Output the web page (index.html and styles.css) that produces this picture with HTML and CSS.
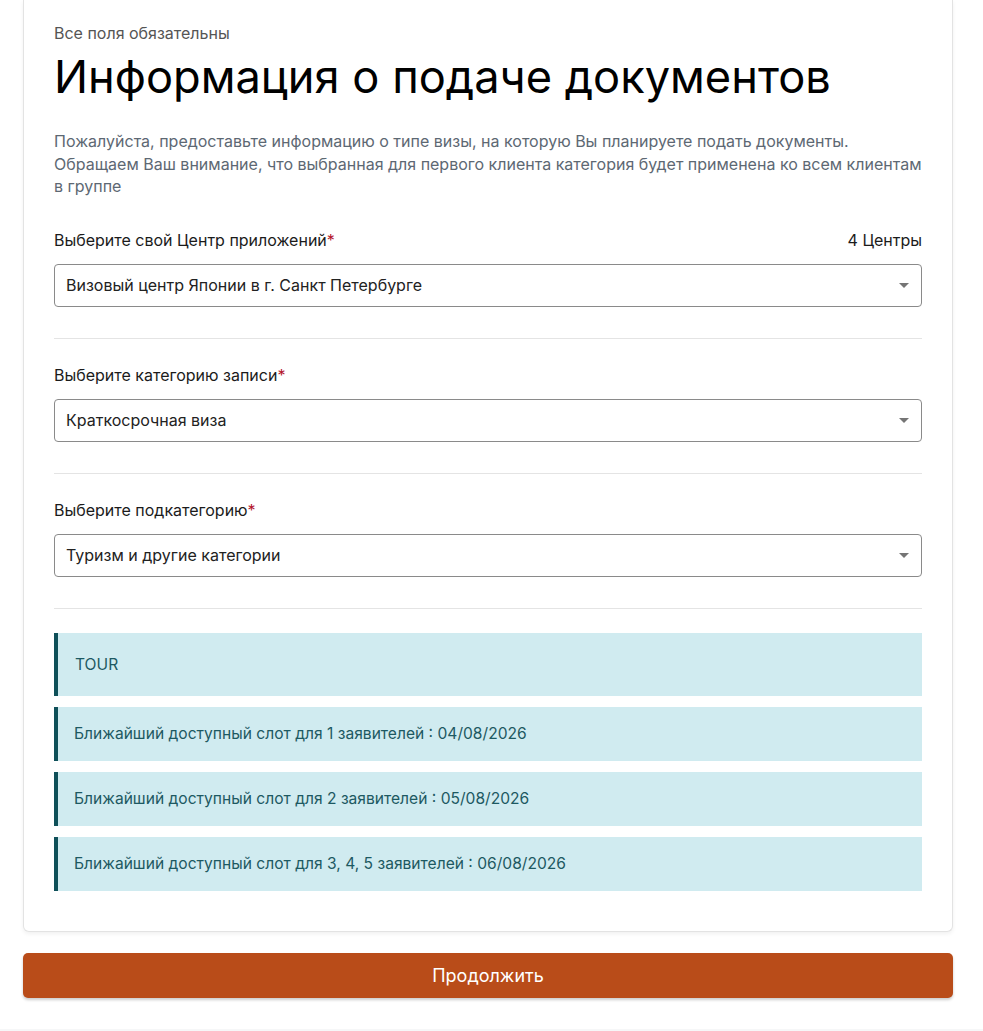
FILE: index.html
```html
<!doctype html>
<html lang="ru">
  <head>
    <meta charset="UTF-8" />
    <meta name="viewport" content="width=device-width, initial-scale=1.0" />
    <title>Информация о подаче документов</title>
    <link rel="stylesheet" href="styles.css">
  </head>
  <body>
    <div class="page">
      <!-- Form card -->
      <div class="form-card">
        <div class="required-note">Все поля обязательны</div>
        <h1 class="form-title">Информация о подаче документов</h1>
        <p class="form-intro">
          Пожалуйста, предоставьте информацию о типе визы, на которую Вы планируете подать документы.
          Обращаем Ваш внимание, что выбранная для первого клиента категория будет применена ко всем клиентам
          в группе
        </p>

        <div class="field-group">
          <div class="field-head">
            <label>Выберите свой Центр приложений<span class="req">*</span></label>
            <span class="field-count">4 Центры</span>
          </div>
          <div class="select-box">
            <span>Визовый центр Японии в г. Санкт Петербурге</span>
            <span class="select-arrow"></span>
          </div>
        </div>

        <div class="field-group">
          <div class="field-head">
            <label>Выберите категорию записи<span class="req">*</span></label>
          </div>
          <div class="select-box">
            <span>Краткосрочная виза</span>
            <span class="select-arrow"></span>
          </div>
        </div>

        <div class="field-group">
          <div class="field-head">
            <label>Выберите подкатегорию<span class="req">*</span></label>
          </div>
          <div class="select-box">
            <span>Туризм и другие категории</span>
            <span class="select-arrow"></span>
          </div>
        </div>

        <div class="info-list">
          <div class="info-box tall">TOUR</div>
          <div class="info-box">Ближайший доступный слот для 1 заявителей : 04/08/2026</div>
          <div class="info-box">Ближайший доступный слот для 2 заявителей : 05/08/2026</div>
          <div class="info-box">Ближайший доступный слот для 3, 4, 5 заявителей : 06/08/2026</div>
        </div>
      </div>

      <button class="continue-button">Продолжить</button>
    </div>
    <div class="page-footer"></div>
  </body>
</html>
```

FILE: styles.css
```css
/* Appointment form styles */
:root {
  --text-dark: #1b1b1b;
  --text-muted: #5d6873;
  --line: #e4e4e4;
  --teal-dark: #0f5059;
  --teal-bg: #d0ebf0;
  --accent: #b94c19;
}

body {
  font-family: 'Inter', 'Roboto', Arial, sans-serif;
  background: #fff;
  color: var(--text-dark);
  margin: 0;
  padding: 0;
}

.page {
  width: 930px;
  margin-left: 23px;
  padding-bottom: 31px;
}

.form-card {
  background: #fff;
  border: 1px solid #e3e3e3;
  border-top: none;
  border-radius: 0 0 6px 6px;
  box-shadow: 0 2px 4px rgba(0, 0, 0, 0.06);
  padding: 24px 30px 40px;
}

.required-note {
  font-size: 16px;
  line-height: 18px;
  color: #555;
}

.form-title {
  font-size: 45.2px;
  font-weight: 400;
  line-height: 54px;
  margin: 8px 0 0;
  color: #000;
}

.form-intro {
  font-size: 16px;
  line-height: 22.5px;
  color: var(--text-muted);
  margin: 26px 0 0;
}

.field-group {
  padding: 25px 0 31px;
  border-bottom: 1px solid var(--line);
}

.form-intro + .field-group {
  padding-top: 31px;
}

.field-head {
  display: flex;
  justify-content: space-between;
  align-items: center;
  font-size: 16px;
  line-height: 22px;
  margin-bottom: 13px;
}

.field-head label {
  color: var(--text-dark);
}

.req {
  color: #b3142b;
}

.field-count {
  color: var(--text-dark);
}

.select-box {
  display: flex;
  align-items: center;
  justify-content: space-between;
  height: 41px;
  border: 1px solid #8a8a8a;
  border-radius: 4px;
  padding: 0 12px 0 11px;
  font-size: 16px;
  color: #222;
}

.select-arrow {
  width: 0;
  height: 0;
  border-left: 5px solid transparent;
  border-right: 5px solid transparent;
  border-top: 5px solid #757575;
}

.info-list {
  display: flex;
  flex-direction: column;
  gap: 11px;
  margin-top: 24px;
}

.info-box {
  background: var(--teal-bg);
  border-left: 4px solid var(--teal-dark);
  color: #1d5962;
  font-size: 15.6px;
  height: 54px;
  display: flex;
  align-items: center;
  padding-left: 16px;
}

.info-box.tall {
  height: 63px;
  padding-left: 17px;
}

.continue-button {
  display: block;
  width: 100%;
  height: 45px;
  margin-top: 21px;
  background: var(--accent);
  color: #fff;
  border: none;
  border-radius: 5px;
  font-family: 'Inter', 'Roboto', Arial, sans-serif;
  font-size: 18px;
  box-shadow: 0 2px 3px rgba(0, 0, 0, 0.2);
  cursor: pointer;
}

.page-footer {
  height: 40px;
  background: #f6f7f8;
}
```
